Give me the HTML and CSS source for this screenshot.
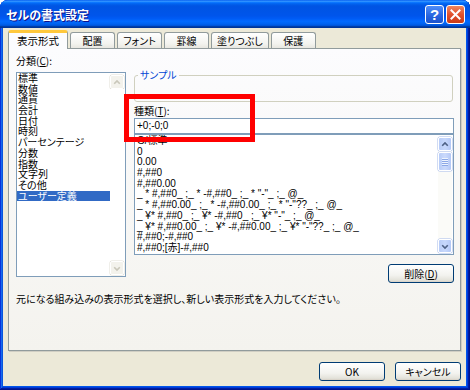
FILE: index.html
```html
<!DOCTYPE html>
<html lang="ja">
<head>
	<meta charset="UTF-8">
	<title>セルの書式設定</title>
	<link rel="stylesheet" href="styles.css">
</head>
<body>
<div class="window">
	<div class="titlebar">
		<span class="title">セルの書式設定</span>
		<span class="tbtn help">?</span>
		<span class="tbtn close">
			<svg width="19" height="19" viewBox="0 0 19 19"><path d="M5 5L14 14M14 5L5 14" stroke="#fff" stroke-width="2.2" stroke-linecap="square"/></svg>
		</span>
	</div>
	<div class="client">
		<div class="tabs">
			<span class="tab active">表示形式</span>
			<span class="tab">配置</span>
			<span class="tab">フォント</span>
			<span class="tab">罫線</span>
			<span class="tab">塗りつぶし</span>
			<span class="tab">保護</span>
		</div>
		<div class="panel">
			<div class="cols">
				<div class="left">
					<div class="label">分類(<u>C</u>):</div>
					<div class="listbox">
						<ul class="items cats">
							<li>標準</li>
							<li>数値</li>
							<li>通貨</li>
							<li>会計</li>
							<li>日付</li>
							<li>時刻</li>
							<li>パーセンテージ</li>
							<li>分数</li>
							<li>指数</li>
							<li>文字列</li>
							<li>その他</li>
							<li class="sel">ユーザー定義</li>
						</ul>
						<div class="vscroll off">
							<span class="sbtn"><svg width="15" height="15" viewBox="0 0 15 15"><path d="M4 9L7.5 5.5L11 9" fill="none" stroke="#c9c7ba" stroke-width="2"/></svg></span>
							<span class="track"></span>
							<span class="sbtn"><svg width="15" height="15" viewBox="0 0 15 15"><path d="M4 6L7.5 9.5L11 6" fill="none" stroke="#c9c7ba" stroke-width="2"/></svg></span>
						</div>
					</div>
				</div>
				<div class="right">
					<fieldset class="sample"><legend>サンプル</legend></fieldset>
					<div class="label">種類(<u>T</u>):</div>
					<div class="input">+0;-0;0</div>
					<div class="listbox fmt">
						<ul class="items">
							<li>G/標準</li>
							<li>0</li>
							<li>0.00</li>
							<li>#,##0</li>
							<li>#,##0.00</li>
							<li>_ * #,##0_ ;_ * -#,##0_ ;_ * "-"_ ;_ @_</li>
							<li>_ * #,##0.00_ ;_ * -#,##0.00_ ;_ * "-"??_ ;_ @_</li>
							<li>_ ¥* #,##0_ ;_ ¥* -#,##0_ ;_ ¥* "-"_ ;_ @_</li>
							<li>_ ¥* #,##0.00_ ;_ ¥* -#,##0.00_ ;_ ¥* "-"??_ ;_ @_</li>
							<li>#,##0;-#,##0</li>
							<li>#,##0;[赤]-#,##0</li>
						</ul>
						<div class="vscroll">
							<span class="sbtn"><svg width="15" height="15" viewBox="0 0 15 15"><path d="M4 9L7.5 5.5L11 9" fill="none" stroke="#4d6185" stroke-width="2"/></svg></span>
							<span class="track"><span class="thumb"><i></i><i></i><i></i><i></i></span></span>
							<span class="sbtn"><svg width="15" height="15" viewBox="0 0 15 15"><path d="M4 6L7.5 9.5L11 6" fill="none" stroke="#4d6185" stroke-width="2"/></svg></span>
						</div>
					</div>
					<div class="actions">
						<button class="btn">削除(<u>D</u>)</button>
					</div>
				</div>
			</div>
			<p class="desc">元になる組み込みの表示形式を選択し、新しい表示形式を入力してください。</p>
			<div class="mark"></div>
		</div>
		<div class="footer">
			<button class="btn">OK</button>
			<button class="btn">キャンセル</button>
		</div>
	</div>
</div>
</body>
</html>
```

FILE: styles.css
```css
* {
    box-sizing: border-box;
}
body {
    margin: 0;
    background: #fff;
    font-family: "Noto Sans CJK JP", sans-serif;
    font-size: 10px;
    font-feature-settings: "palt";
    color: #000;
}
.window {
    width: 470px;
    height: 390px;
    display: flex;
    flex-direction: column;
    background: #0055ea;
    border-radius: 8px 8px 0 0;
    overflow: hidden;
    box-shadow: inset -1px -1px #00138c, inset 1px 1px #0831d9, inset -2px -2px #001ea0, inset 2px 2px #166aee, inset -3px -3px #003bda, inset 3px 3px #0855dd;
}
.titlebar {
    height: 29px;
    display: flex;
    align-items: center;
    gap: 2px;
    padding: 0 5px 0 6px;
    background: linear-gradient(180deg, #0058ee 0%, #3593ff 4%, #288eff 6%, #127dff 8%, #036ffc 10%, #0262ee 14%, #0057e5 20%, #0054e3 24%, #0055eb 56%, #005bf5 66%, #026afe 76%, #0062ef 86%, #0052d6 92%, #0040ab 94%, #003092 100%);
}
.title {
    flex: 1;
    color: #fff;
    font-size: 12px;
    font-weight: bold;
    text-shadow: 1px 1px #0f1089;
}
.tbtn {
    width: 19px; height: 19px;
    border: 1px solid #fff;
    border-radius: 3px;
    display: flex;
    align-items: center;
    justify-content: center;
    color: #fff;
}
.help {
    background: linear-gradient(180deg, #4f8df9, #2663de 60%, #1c53cd);
    font-family: "Liberation Sans", sans-serif;
    font-size: 15px;
    font-weight: bold;
}
.close {
    background: linear-gradient(180deg, #f0865f, #e0512e 50%, #c93a17);
}
.close svg {
    display: block;
}
.client {
    flex: 1;
    margin: 0 4px 4px 3px;
    background: #ece9d8;
    padding: 2px 5px 5px 5px;
    display: flex;
    flex-direction: column;
}
.tabs {
    display: flex;
    align-items: flex-end;
    height: 18px;
    gap: 2px;
    position: relative;
    z-index: 1;
}
.tab {
    height: 16px;
    min-width: 45px;
    padding: 0 5px;
    text-align: center;
    border: 1px solid #919b9c;
    border-bottom: none;
    border-radius: 3px 3px 0 0;
    background: linear-gradient(180deg, #fff, #f3f3ef 70%, #e8e7e0);
    line-height: 15px;
}
.tab.active {
    height: 19px;
    width: 60px;
    margin-bottom: -1px;
    border-top: 3px solid #ffc83c;
    background: #fcfcfe;
    font-size: 10.5px;
    line-height: 15px;
}
.panel {
    position: relative;
    height: 303px;
    border: 1px solid #919b9c;
    box-shadow: 1px 1px #d0cec3;
    background: linear-gradient(180deg, #fcfcfe, #f4f3ee);
    padding: 5px 6px 0 7px;
}
.cols {
    display: flex;
    gap: 8px;
}
.left {
    width: 110px;
}
.label {
    height: 13px;
    line-height: 13px;
}
.left .label {
    margin-bottom: 5px;
}
.listbox {
    display: flex;
    height: 205px;
    border: 1px solid #7f9db9;
    background: #fff;
}
.items {
    flex: 1;
    list-style: none;
    margin: 0;
    padding: 0;
    overflow: hidden;
}
.items.cats {
    overflow: visible;
}
.items li {
    height: 10.7px;
    line-height: 10.7px;
    padding-left: 1px;
    white-space: nowrap;
}
.items li.sel {
    background: #316ac5;
    color: #fff;
}
.vscroll {
    width: 15px;
    display: flex;
    flex-direction: column;
    padding: 2px 1px 1px 0;
}
.sbtn {
    height: 14px;
    border: 1px solid #fff;
    border-radius: 2px;
    background: linear-gradient(90deg, #b9cdf7, #c7d8fc 50%, #b4c8f6);
    box-shadow: 0 0 0 0.5px #a4b9ea;
    display: flex;
    align-items: center;
    justify-content: center;
}
.sbtn svg {
    display: block;
    width: 13px;
    height: 13px;
}
.track {
    flex: 1;
    background: #fbfbf8;
    padding: 1px 0;
}
.thumb {
    display: flex;
    flex-direction: column;
    align-items: center;
    justify-content: center;
    gap: 1px;
    height: 19px;
    border: 1px solid #fff;
    border-radius: 2px;
    background: linear-gradient(90deg, #b9cdf7, #cbdafc 50%, #b4c8f6);
    box-shadow: 0 0 0 0.5px #a4b9ea;
}
.thumb i {
    width: 6px;
    height: 1px;
    background: #eef4fe;
    box-shadow: 0 1px #8ca8e6;
}
.vscroll.off .sbtn {
    background: #f3f2ec;
    box-shadow: 0 0 0 0.5px #e2e0d6;
}
.vscroll.off .track {
    background: #fff;
}
.right {
    flex: 1;
    padding-top: 15px;
}
.sample {
    margin: 0 1px 0 0;
    padding: 0;
    height: 33px;
    border: 1px solid #d0d0bf;
    border-radius: 3px;
}
.sample legend {
    margin-left: 3px;
    padding: 0 2px;
    color: #0046d5;
    line-height: 12px;
}
.right .label {
    margin-top: 2px;
}
.input {
    margin-top: 1px;
    height: 16px;
    border: 1px solid #7f9db9;
    background: #fff;
    padding-left: 2px;
    line-height: 14px;
    font-family: "Liberation Sans", "Noto Sans CJK JP", sans-serif;
    font-size: 10px;
}
.fmt {
    height: 121px;
}
.fmt .items {
    padding-top: 1px;
    font-family: "Liberation Sans", "Noto Sans CJK JP", sans-serif;
    font-size: 10px;
}
.fmt .items li {
    padding-left: 2px;
}
.actions {
    display: flex;
    justify-content: flex-end;
    margin-top: 9px;
}
.btn {
    width: 66px;
    height: 19px;
    margin: 0;
    padding: 0;
    border: 1px solid #003c74;
    border-radius: 3px;
    background: linear-gradient(180deg, #fff, #f3f3ef 60%, #e3e2da 90%, #d6d0c5);
    font: inherit;
    line-height: 16px;
    color: #000;
}
.desc {
    margin: 9px 0 0 0;
    line-height: 13px;
}
.footer {
    display: flex;
    justify-content: flex-end;
    gap: 10px;
    margin-top: 11px;
}
.mark {
    position: absolute;
    left: 115px;
    top: 45px;
    width: 131px;
    height: 48px;
    border: 5px solid #ff0000;
}
```
